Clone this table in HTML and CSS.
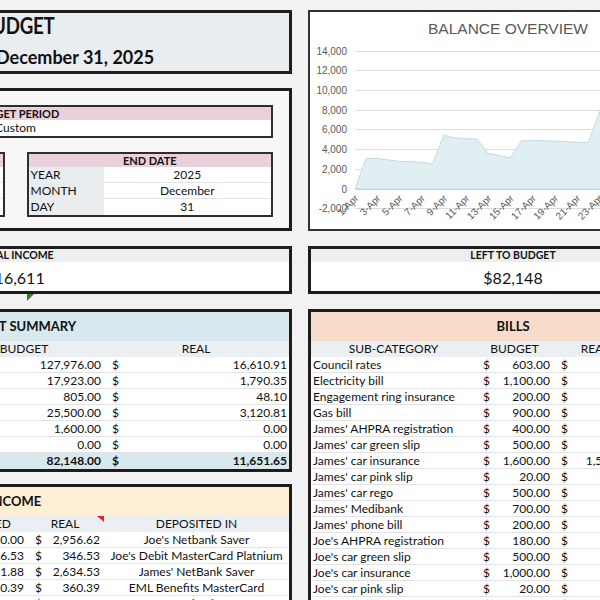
FILE: index.html
```html
<!DOCTYPE html>
<html lang="en">
<head>
<meta charset="utf-8">
<title>Budget</title>
<link rel="stylesheet" href="styles.css">
</head>
<body>
<div class="sheet">

  <div class="stack stack-top">
    <section class="panel title-panel">
      <div class="title-main"><span class="title-word">BUDGET</span></div>
      <div class="title-sub">December 31, 2025</div>
    </section>
    <section class="panel period-panel">
      <table class="ptable">
        <tr><th>BUDGET PERIOD</th></tr>
        <tr><td class="center">Custom</td></tr>
      </table>
      <div class="dates">
        <table class="ptable date">
          <colgroup><col class="c-lab"><col></colgroup>
          <tr><th colspan="2">START DATE</th></tr>
          <tr><td class="lab">YEAR</td><td class="val"></td></tr>
          <tr><td class="lab">MONTH</td><td class="val"></td></tr>
          <tr><td class="lab">DAY</td><td class="val last"></td></tr>
        </table>
        <table class="ptable date">
          <colgroup><col class="c-lab"><col></colgroup>
          <tr><th colspan="2">END DATE</th></tr>
          <tr><td class="lab">YEAR</td><td class="val">2025</td></tr>
          <tr><td class="lab">MONTH</td><td class="val">December</td></tr>
          <tr><td class="lab">DAY</td><td class="val last">31</td></tr>
        </table>
      </div>
    </section>
  </div>

  <section class="panel chart-panel">
    <svg class="chart" width="406" height="217" viewBox="0 0 406 217">
      <text class="c-title" x="198" y="21.5" text-anchor="middle">BALANCE OVERVIEW</text>
      <g class="grid">
        <line x1="45" x2="406" y1="39.5" y2="39.5"/>
        <line x1="45" x2="406" y1="58.5" y2="58.5"/>
        <line x1="45" x2="406" y1="78.5" y2="78.5"/>
        <line x1="45" x2="406" y1="98.5" y2="98.5"/>
        <line x1="45" x2="406" y1="117.5" y2="117.5"/>
        <line x1="45" x2="406" y1="137.5" y2="137.5"/>
        <line x1="45" x2="406" y1="157.5" y2="157.5"/>
        <line x1="45" x2="406" y1="196.5" y2="196.5"/>
      </g>
      <g class="ylab" text-anchor="end">
        <text x="37" y="43">14,000</text>
        <text x="37" y="62">12,000</text>
        <text x="37" y="82">10,000</text>
        <text x="37" y="102">8,000</text>
        <text x="37" y="121">6,000</text>
        <text x="37" y="141">4,000</text>
        <text x="37" y="161">2,000</text>
        <text x="37" y="181">0</text>
        <text x="37" y="200">-2,000</text>
      </g>
      <path class="area" d="M45,177 L56.1,146.5 L67.2,146.5 L78.3,147.9 L89.4,149.4 L100.5,149.6 L111.6,150.4 L122.7,151.9 L133.8,123.3 L144.9,125.8 L156,126.7 L167.1,127.2 L178.2,141.5 L189.3,143.5 L200.4,146 L211.5,128.7 L222.6,128.7 L233.7,128.5 L244.8,129.2 L255.9,129.7 L267,130.2 L278.1,130.7 L289.2,101.1 L300.3,73.5 L311.4,60 L311.4,177 Z"/>
      <line class="axis" x1="45" x2="406" y1="177.5" y2="177.5"/>
      <g class="xlab" text-anchor="end">
        <text x="49" y="187" transform="rotate(-45 49 187)">1-Apr</text>
        <text x="71.2" y="187" transform="rotate(-45 71.2 187)">3-Apr</text>
        <text x="93.4" y="187" transform="rotate(-45 93.4 187)">5-Apr</text>
        <text x="115.6" y="187" transform="rotate(-45 115.6 187)">7-Apr</text>
        <text x="137.8" y="187" transform="rotate(-45 137.8 187)">9-Apr</text>
        <text x="160" y="187" transform="rotate(-45 160 187)">11-Apr</text>
        <text x="182.2" y="187" transform="rotate(-45 182.2 187)">13-Apr</text>
        <text x="204.4" y="187" transform="rotate(-45 204.4 187)">15-Apr</text>
        <text x="226.6" y="187" transform="rotate(-45 226.6 187)">17-Apr</text>
        <text x="248.8" y="187" transform="rotate(-45 248.8 187)">19-Apr</text>
        <text x="271" y="187" transform="rotate(-45 271 187)">21-Apr</text>
        <text x="293.2" y="187" transform="rotate(-45 293.2 187)">23-Apr</text>
        <text x="315.4" y="187" transform="rotate(-45 315.4 187)">25-Apr</text>
      </g>
    </svg>
  </section>

  <section class="panel kpi kpi-income">
    <div class="kpi-head">TOTAL INCOME</div>
    <div class="kpi-value">$16,611</div>
    <span class="flag-green"></span>
  </section>

  <section class="panel kpi">
    <div class="kpi-head">LEFT TO BUDGET</div>
    <div class="kpi-value">$82,148</div>
  </section>

  <div class="stack stack-bottom">
    <section class="panel">
      <div class="sec-head head-blue">BUDGET SUMMARY</div>
      <table class="gtable summary">
        <colgroup><col class="s1"><col class="s2"><col class="s3"><col class="s4"><col class="s5"></colgroup>
        <tr class="sub"><th></th><th colspan="2">BUDGET</th><th colspan="2">REAL</th></tr>
        <tr><td></td><td class="cur">$</td><td class="num">127,976.00</td><td class="cur">$</td><td class="num">16,610.91</td></tr>
        <tr><td></td><td class="cur">$</td><td class="num">17,923.00</td><td class="cur">$</td><td class="num">1,790.35</td></tr>
        <tr><td></td><td class="cur">$</td><td class="num">805.00</td><td class="cur">$</td><td class="num">48.10</td></tr>
        <tr><td></td><td class="cur">$</td><td class="num">25,500.00</td><td class="cur">$</td><td class="num">3,120.81</td></tr>
        <tr><td></td><td class="cur">$</td><td class="num">1,600.00</td><td class="cur">$</td><td class="num">0.00</td></tr>
        <tr><td></td><td class="cur">$</td><td class="num">0.00</td><td class="cur">$</td><td class="num">0.00</td></tr>
        <tr class="total"><td></td><td class="cur">$</td><td class="num">82,148.00</td><td class="cur">$</td><td class="num">11,651.65</td></tr>
      </table>
    </section>

    <section class="panel">
      <div class="sec-head head-yellow">INCOME</div>
      <table class="gtable income">
        <colgroup><col class="i1"><col class="i2"><col class="i3"><col class="i4"><col class="i5"><col class="i6"></colgroup>
        <tr class="sub"><th></th><th colspan="2">BUDGETED</th><th colspan="2" class="flagged">REAL</th><th>DEPOSITED IN</th></tr>
        <tr><td></td><td class="cur">$</td><td class="num">2,600.00</td><td class="cur">$</td><td class="num">2,956.62</td><td class="center">Joe's Netbank Saver</td></tr>
        <tr><td></td><td class="cur">$</td><td class="num">346.53</td><td class="cur">$</td><td class="num">346.53</td><td class="center">Joe's Debit MasterCard Platnium</td></tr>
        <tr><td></td><td class="cur">$</td><td class="num">2,631.88</td><td class="cur">$</td><td class="num">2,634.53</td><td class="center">James' NetBank Saver</td></tr>
        <tr><td></td><td class="cur">$</td><td class="num">360.39</td><td class="cur">$</td><td class="num">360.39</td><td class="center">EML Benefits MasterCard</td></tr>
        <tr><td></td><td class="cur">$</td><td class="num">2,600.00</td><td class="cur">$</td><td class="num">2,600.00</td><td class="center">Joe's Netbank Saver</td></tr>
      </table>
    </section>
  </div>

  <section class="panel">
    <div class="sec-head head-peach">BILLS</div>
    <table class="gtable bills">
      <colgroup><col class="b1"><col class="b2"><col class="b3"><col class="b4"><col class="b5"><col class="b6"></colgroup>
      <tr class="sub"><th>SUB-CATEGORY</th><th colspan="2">BUDGET</th><th colspan="2">REAL</th><th></th></tr>
      <tr><td class="name">Council rates</td><td class="cur">$</td><td class="num">603.00</td><td class="cur">$</td><td class="num">-</td><td></td></tr>
      <tr><td class="name">Electricity bill</td><td class="cur">$</td><td class="num">1,100.00</td><td class="cur">$</td><td class="num">-</td><td></td></tr>
      <tr><td class="name">Engagement ring insurance</td><td class="cur">$</td><td class="num">200.00</td><td class="cur">$</td><td class="num">-</td><td></td></tr>
      <tr><td class="name">Gas bill</td><td class="cur">$</td><td class="num">900.00</td><td class="cur">$</td><td class="num">-</td><td></td></tr>
      <tr><td class="name">James' AHPRA registration</td><td class="cur">$</td><td class="num">400.00</td><td class="cur">$</td><td class="num">-</td><td></td></tr>
      <tr><td class="name">James' car green slip</td><td class="cur">$</td><td class="num">500.00</td><td class="cur">$</td><td class="num">-</td><td></td></tr>
      <tr><td class="name">James' car insurance</td><td class="cur">$</td><td class="num">1,600.00</td><td class="cur">$</td><td class="num">1,550.00</td><td></td></tr>
      <tr><td class="name">James' car pink slip</td><td class="cur">$</td><td class="num">20.00</td><td class="cur">$</td><td class="num">-</td><td></td></tr>
      <tr><td class="name">James' car rego</td><td class="cur">$</td><td class="num">500.00</td><td class="cur">$</td><td class="num">-</td><td></td></tr>
      <tr><td class="name">James' Medibank</td><td class="cur">$</td><td class="num">700.00</td><td class="cur">$</td><td class="num">-</td><td></td></tr>
      <tr><td class="name">James' phone bill</td><td class="cur">$</td><td class="num">200.00</td><td class="cur">$</td><td class="num">-</td><td></td></tr>
      <tr><td class="name">Joe's AHPRA registration</td><td class="cur">$</td><td class="num">180.00</td><td class="cur">$</td><td class="num">-</td><td></td></tr>
      <tr><td class="name">Joe's car green slip</td><td class="cur">$</td><td class="num">500.00</td><td class="cur">$</td><td class="num">-</td><td></td></tr>
      <tr><td class="name">Joe's car insurance</td><td class="cur">$</td><td class="num">1,000.00</td><td class="cur">$</td><td class="num">-</td><td></td></tr>
      <tr><td class="name">Joe's car pink slip</td><td class="cur">$</td><td class="num">20.00</td><td class="cur">$</td><td class="num">-</td><td></td></tr>
      <tr><td class="name">Joe's car rego</td><td class="cur">$</td><td class="num">550.00</td><td class="cur">$</td><td class="num">-</td><td></td></tr>
    </table>
  </section>

</div>
</body>
</html>
```

FILE: styles.css
```css
html, body {
  margin: 0;
  padding: 0;
  width: 600px;
  height: 600px;
  overflow: hidden;
  background: #f2f2f2;
}
body {
  font-family: Lato, "Liberation Sans", sans-serif;
  font-size: 12px;
  color: #111;
}

.sheet {
  display: grid;
  grid-template-columns: 554px 410px;
  column-gap: 16px;
  row-gap: 15px;
  margin-left: -262px;
  padding-top: 10px;
  width: max-content;
  align-items: start;
}

.stack { display: flex; flex-direction: column; }
.stack-top { gap: 14px; }
.stack-bottom { gap: 12px; }

.panel {
  border: 3px solid #1d1d1d;
  box-sizing: border-box;
  background: #fff;
}

/* title */
.title-panel {
  height: 64px;
  background: #e9edf0;
  padding-left: 239px;
}
.title-main {
  font-weight: 700;
  font-size: 22px;
  line-height: 26px;
}
.title-word {
  display: inline-block;
  transform: scaleX(0.85);
  transform-origin: left center;
  letter-spacing: -0.3px;
}
.title-sub {
  font-weight: 700;
  font-size: 18px;
  line-height: 22px;
  margin-top: 7px;
  padding-left: 16px;
}

/* budget period */
.period-panel {
  height: 143px;
  background: #f7f7f7;
  padding: 14px 16px 0 17px;
}
.ptable {
  width: 100%;
  table-layout: fixed;
  border-collapse: separate;
  border-spacing: 0;
  border: 2px solid #2e2e2e;
  background: #fff;
}
.ptable th {
  background: #e9d0da;
  font-weight: 700;
  font-size: 11px;
  height: 13px;
  line-height: 13px;
  padding: 0;
}
.ptable td {
  height: 16px;
  line-height: 16px;
  padding: 0 2px;
  white-space: nowrap;
}
.center { text-align: center; }
.dates {
  display: flex;
  gap: 22px;
  margin-top: 14px;
}
.dates .date { flex: 1 1 0; width: auto; }
.c-lab { width: 75px; }
.date .lab { background: #e9edf0; }
.date .val { text-align: center; box-shadow: inset 0 -1px 0 #e4e4e4; }
.date .val.last { box-shadow: none; }

/* chart */
.chart-panel {
  height: 221px;
  border: 2px solid #333;
  overflow: hidden;
}
.chart { display: block; font-family: "Liberation Sans", Arial, sans-serif; }
.c-title { font-size: 15.5px; fill: #595959; }
.grid line { stroke: #dcdcdc; stroke-width: 1; }
.axis { stroke: #d0d0d0; stroke-width: 1; }
.ylab text, .xlab text { font-size: 10px; fill: #595959; }
.area { fill: #e1eff3; stroke: #bfdbe3; stroke-width: 1; }

/* kpi */
.kpi {
  height: 48px;
  text-align: center;
}
.kpi-income { position: relative; }
.kpi-head {
  background: #eceff1;
  height: 13px;
  line-height: 13px;
  font-weight: 700;
  font-size: 10.5px;
}
.kpi-value {
  font-size: 16px;
  line-height: 24px;
  padding-top: 4px;
}
.flag-green {
  position: absolute;
  left: 286px;
  top: calc(100% + 3px);
  width: 0;
  height: 0;
  border-top: 7px solid #3d7d28;
  border-right: 7px solid transparent;
}

/* section tables */
.sec-head {
  height: 29px;
  line-height: 29px;
  font-weight: 700;
  font-size: 13px;
  text-align: center;
}
.head-blue { background: #d7e9ef; }
.head-yellow { background: #fcefd3; }
.head-peach { background: #f8dccb; }

.gtable {
  width: 100%;
  table-layout: fixed;
  border-collapse: separate;
  border-spacing: 0;
}
.gtable th {
  background: #eceff1;
  font-weight: 400;
  height: 16px;
  line-height: 16px;
  padding: 0;
  white-space: nowrap;
}
.gtable td {
  height: 16px;
  line-height: 16px;
  padding: 0;
  white-space: nowrap;
  overflow: hidden;
  box-shadow: inset 0 -1px 0 #e3e3e3;
}
.gtable .num { text-align: right; padding-right: 2px; }
.gtable .total td { background: #d7e9ef; font-weight: 700; box-shadow: none; }

.s1 { width: 204px; }
.s2 { width: 20px; }
.s3 { width: 138px; }
.s4 { width: 20px; }
.s5 { width: 166px; }
.summary .cur { padding-left: 9px; }

.i1 { width: 190px; }
.i2 { width: 20px; }
.i3 { width: 75px; }
.i4 { width: 20px; }
.i5 { width: 58px; }
.i6 { width: 185px; }
.income .cur { padding-left: 9px; }
.income td:nth-child(5) { padding-right: 4px; }
.flagged { position: relative; }
.flagged::after {
  content: "";
  position: absolute;
  top: 0;
  right: 0;
  width: 0;
  height: 0;
  border-top: 6px solid #e0262b;
  border-left: 7px solid transparent;
}

.b1 { width: 165px; }
.b2 { width: 16px; }
.b3 { width: 61px; }
.b4 { width: 16px; }
.b5 { width: 68px; }
.b6 { width: 78px; }
.bills .name { padding-left: 2px; }
.bills .cur { padding-left: 7px; }
.bills td:nth-child(3) { padding-right: 3px; }
.bills td:nth-child(4) { padding-left: 8px; }
.bills td:nth-child(5) { padding-right: 4px; }
```
